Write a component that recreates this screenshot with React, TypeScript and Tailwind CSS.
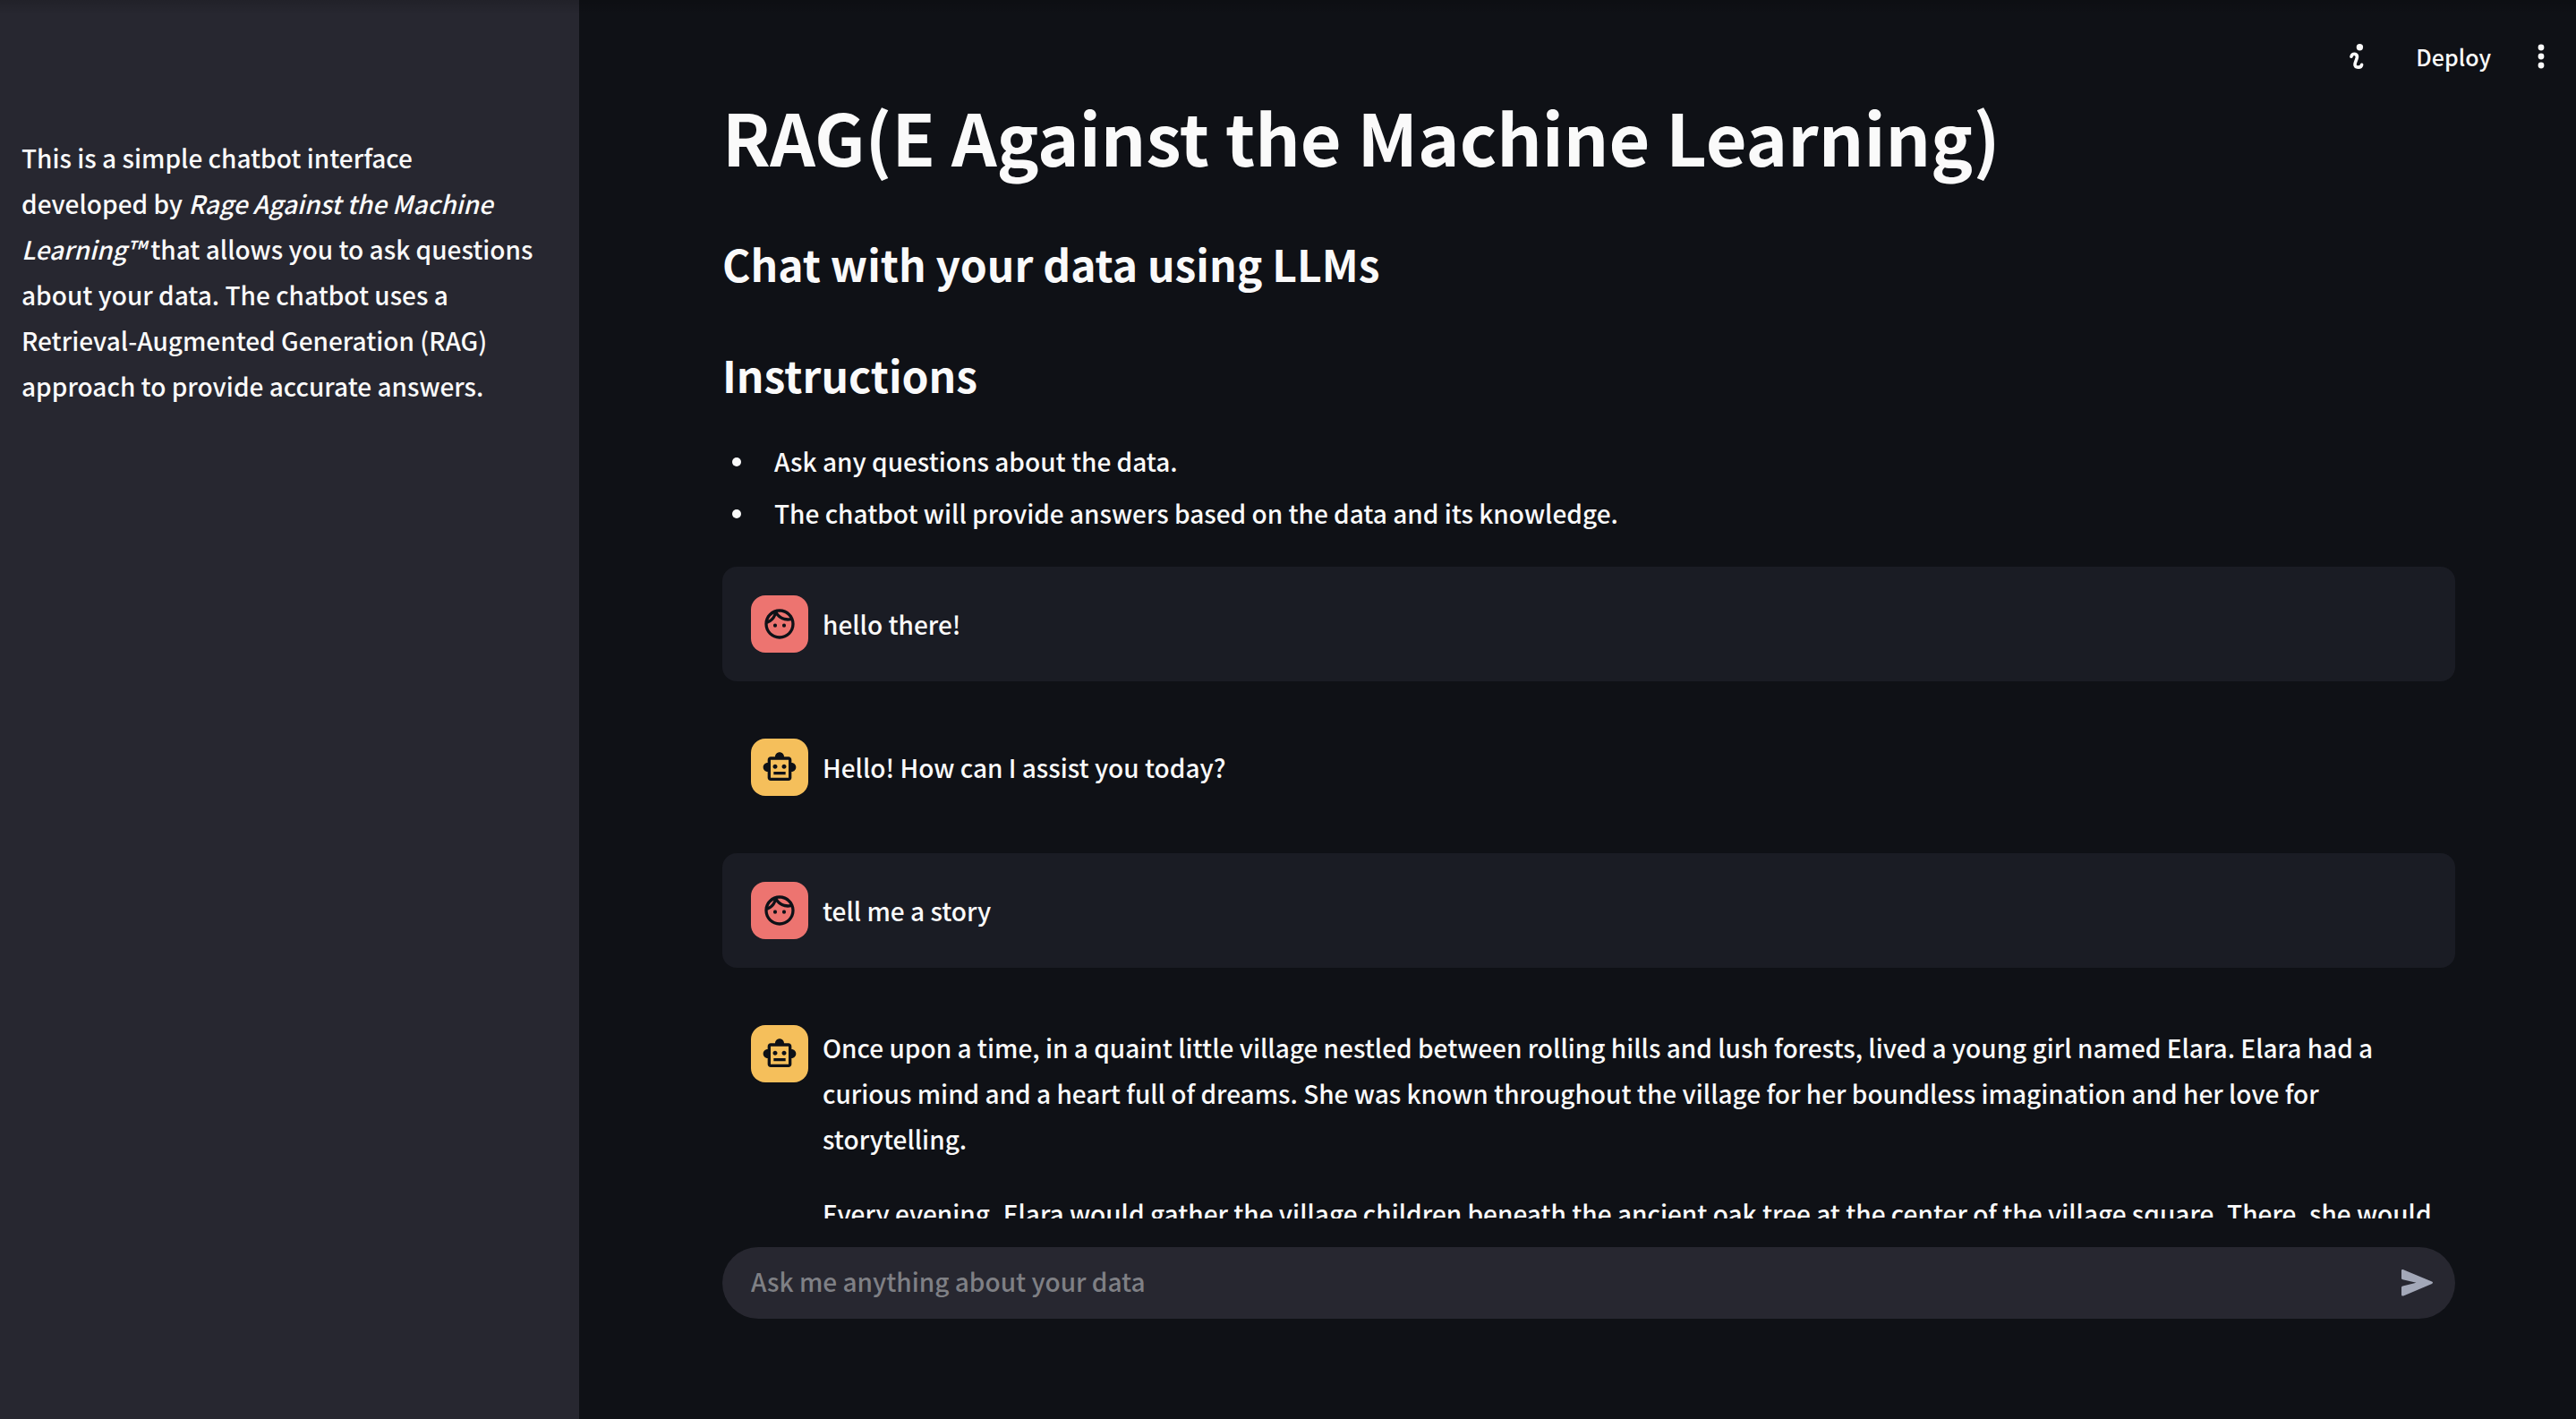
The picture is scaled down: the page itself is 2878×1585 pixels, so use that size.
import type { ReactNode } from 'react';
import { MdOutlineFace, MdOutlineSmartToy } from 'react-icons/md';

type Message = { role: 'user' | 'assistant'; paragraphs: string[] };

const messages: Message[] = [
  { role: 'user', paragraphs: ['hello there!'] },
  { role: 'assistant', paragraphs: ['Hello! How can I assist you today?'] },
  { role: 'user', paragraphs: ['tell me a story'] },
  {
    role: 'assistant',
    paragraphs: [
      'Once upon a time, in a quaint little village nestled between rolling hills and lush forests, lived a young girl named Elara. Elara had a curious mind and a heart full of dreams. She was known throughout the village for her boundless imagination and her love for storytelling.',
      'Every evening, Elara would gather the village children beneath the ancient oak tree at the center of the village square. There, she would',
    ],
  },
];

function Bullet({ children }: { children: ReactNode }) {
  return (
    <li className="flex items-center">
      <span className="mr-[37px] ml-[11px] size-[10px] shrink-0 rounded-full bg-[#fafafa]" />
      {children}
    </li>
  );
}

function ChatMessage({ role, paragraphs }: Message) {
  const isUser = role === 'user';
  return (
    <article className={`flex items-start gap-4 rounded-2xl py-8 pr-6 pl-8 ${isUser ? 'bg-[#1a1c24]' : ''}`}>
      <div
        className={`flex size-16 shrink-0 items-center justify-center rounded-2xl text-[#0e1117] ${
          isUser ? 'bg-[#ed7470]' : 'bg-[#f5bf5b]'
        }`}
      >
        {isUser ? <MdOutlineFace size={40} /> : <MdOutlineSmartToy size={40} />}
      </div>
      <div className="flex min-w-0 flex-1 flex-col gap-8 self-center">
        {paragraphs.map((text) => (
          <p key={text}>{text}</p>
        ))}
      </div>
    </article>
  );
}

export default function App() {
  return (
    <div className="relative flex h-screen overflow-hidden bg-[#0f1116] font-['Noto_Sans_CJK_SC','Noto_Sans',sans-serif] text-[28px] leading-[51px] font-medium text-[#fafafa]">
      <div className="pointer-events-none absolute inset-x-0 top-0 h-4 bg-linear-to-b from-black/15 to-transparent" />
      <aside className="w-[647px] shrink-0 bg-[#272730] pt-[151px] pr-12 pl-6">
        <p>
          This is a simple chatbot interface developed by <em>Rage Against the Machine Learning™</em> that
          allows you to ask questions about your data. The chatbot uses a Retrieval-Augmented Generation (RAG)
          approach to provide accurate answers.
        </p>
      </aside>

      <div className="flex min-w-0 flex-1 flex-col">
        <header className="flex h-[104px] shrink-0 items-center justify-end pt-[22px] pr-[35px] text-[25px]">
          <button type="button" aria-label="Running status" className="mr-[58px]">
            <svg width="16" height="28" viewBox="0 0 16 28" fill="none">
              <circle cx="11.4" cy="3.7" r="3.7" fill="#fafafa" />
              <path
                d="M2 14.2C2.6 11.6 4.6 10.8 6.4 11.5C8.6 12.4 8.9 14.2 7.9 17L6.6 20.4C5.5 23.4 6 25.6 8.4 26C11.2 26.4 13.2 25.8 13.6 23.4"
                stroke="#fafafa"
                strokeWidth="3.6"
                strokeLinecap="round"
              />
            </svg>
          </button>
          <button type="button">Deploy</button>
          <button type="button" aria-label="Main menu" className="ml-[52px]">
            <svg width="8" height="28" viewBox="0 0 8 28" fill="#fafafa">
              <circle cx="4" cy="4" r="3.4" />
              <circle cx="4" cy="14" r="3.4" />
              <circle cx="4" cy="24" r="3.4" />
            </svg>
          </button>
        </header>

        <main className="min-h-0 flex-1 overflow-hidden pr-[135px] pl-40">
          <h1 className="text-[79px] leading-[96px] font-bold">RAG(E Against the Machine Learning)</h1>
          <h2 className="mt-16 text-[48px] leading-[60px] font-bold">Chat with your data using LLMs</h2>
          <h2 className="mt-16 text-[48px] leading-[60px] font-bold">Instructions</h2>
          <ul className="mt-[42px] flex flex-col gap-[7px]">
            <Bullet>Ask any questions about the data.</Bullet>
            <Bullet>The chatbot will provide answers based on the data and its knowledge.</Bullet>
          </ul>
          <section aria-label="Conversation" className="mt-[34px] flex flex-col gap-8">
            {messages.map((message) => (
              <ChatMessage key={message.paragraphs[0]} {...message} />
            ))}
          </section>
        </main>

        <footer className="shrink-0 pt-8 pr-[135px] pb-28 pl-40">
          <form className="flex h-20 items-center rounded-full bg-[#272730] pr-6 pl-8">
            <input
              type="text"
              aria-label="Ask me anything about your data"
              placeholder="Ask me anything about your data"
              className="h-full min-w-0 flex-1 bg-transparent pb-1 outline-none placeholder:text-[#7f8085]"
            />
            <button type="button" aria-label="Send message">
              <svg width="36" height="32" viewBox="0 0 36 32" fill="#a3a8b8">
                <path d="M0 2.4C0 1.2 1 .7 2.2 1.2L34 14.6C35.4 15.2 35.4 16.4 34 17L2.2 30.4C1 30.9 0 30.4 0 29.2V21.2C0 20.2 .5 19.6 1.5 19.4L16.5 15.8L1.5 12.2C.5 12 0 11.4 0 10.4Z" />
              </svg>
            </button>
          </form>
        </footer>
      </div>
    </div>
  );
}
